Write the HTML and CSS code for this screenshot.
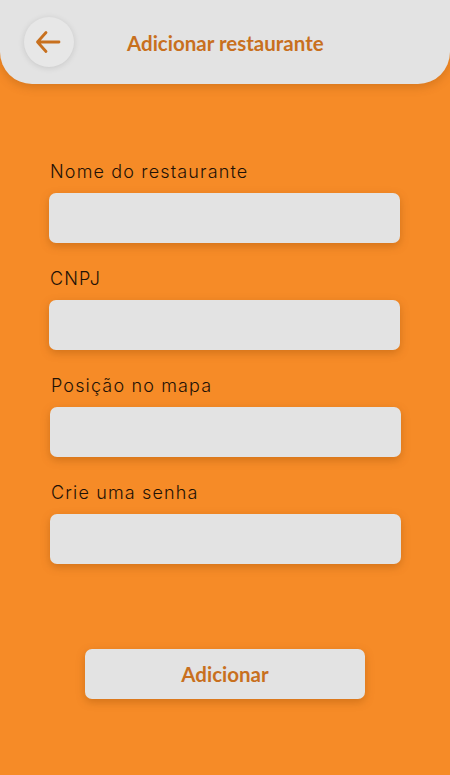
FILE: index.html
```html
<!DOCTYPE html>
<html lang="pt-BR">
<head>
<meta charset="utf-8">
<title>Adicionar restaurante</title>
<link rel="stylesheet" href="styles.css">
</head>
<body>
<div class="screen">
  <header class="topbar">
    <button class="back" aria-label="Voltar">
      <svg width="28" height="28" viewBox="0 0 28 28" fill="none" stroke="#c8701e" stroke-width="2.8" stroke-linecap="round" stroke-linejoin="round">
        <path d="M25 14H3.5M12 4.5L3.5 14L12 23.5"/>
      </svg>
    </button>
    <h1 class="title">Adicionar restaurante</h1>
  </header>
  <form class="form">
    <label class="field">
      <span class="label">Nome do restaurante</span>
      <input class="input" type="text">
    </label>
    <label class="field">
      <span class="label">CNPJ</span>
      <input class="input" type="text">
    </label>
    <label class="field shift">
      <span class="label">Posição no mapa</span>
      <input class="input" type="text">
    </label>
    <label class="field shift">
      <span class="label">Crie uma senha</span>
      <input class="input" type="password">
    </label>
    <button class="submit" type="button">Adicionar</button>
  </form>
</div>
</body>
</html>
```
FILE: styles.css
```css
* { box-sizing: border-box; }
html, body { margin: 0; padding: 0; }
body {
  background: #f68b27;
  width: 450px;
  height: 775px;
  overflow: hidden;
}
.screen {
  display: flex;
  flex-direction: column;
  min-height: 775px;
}
.topbar {
  height: 85px;
  background: #e3e3e3;
  border-radius: 0 0 32px 32px;
  box-shadow: 0 3px 10px rgba(120, 60, 0, 0.25);
  display: flex;
  align-items: center;
  padding: 0 0 0 24px;
  margin-top: -1px;
}
.back {
  width: 50px;
  height: 50px;
  border-radius: 50%;
  border: none;
  background: #e7e7e7;
  box-shadow: 0 1px 6px rgba(0, 0, 0, 0.12);
  display: flex;
  align-items: center;
  justify-content: center;
  padding: 0;
  margin-top: 1px;
}
.back svg { margin-left: -2px; }
.title {
  margin: 2px 0 0 53px;
  font-family: Lato, "Liberation Sans", sans-serif;
  font-weight: 700;
  font-size: 20.5px;
  color: #c8701e;
}
.form {
  display: flex;
  flex-direction: column;
  padding: 77px 50px 0 49px;
}
.field {
  display: flex;
  flex-direction: column;
  margin-bottom: 9px;
}
.field.shift { margin-left: 1px; margin-right: -1px; }
.label {
  font-family: Inter, "Noto Sans", sans-serif;
  font-weight: 300;
  font-size: 18px;
  letter-spacing: 1.15px;
  color: #1f1206;
  line-height: 22px;
  margin-bottom: 10px;
  padding-left: 1px;
}
.input {
  height: 50px;
  border: none;
  border-radius: 7px;
  background: #e3e3e3;
  box-shadow: 0 3px 8px rgba(140, 70, 0, 0.35);
  width: 100%;
  margin-bottom: 16px;
}
.submit {
  align-self: center;
  margin-top: 60px;
  width: 280px;
  height: 50px;
  border: none;
  border-radius: 7px;
  background: #e3e3e3;
  box-shadow: 0 3px 8px rgba(140, 70, 0, 0.35);
  font-family: Lato, "Liberation Sans", sans-serif;
  font-weight: 700;
  font-size: 20.5px;
  color: #c8701e;
  margin-left: 1px;
}
```
